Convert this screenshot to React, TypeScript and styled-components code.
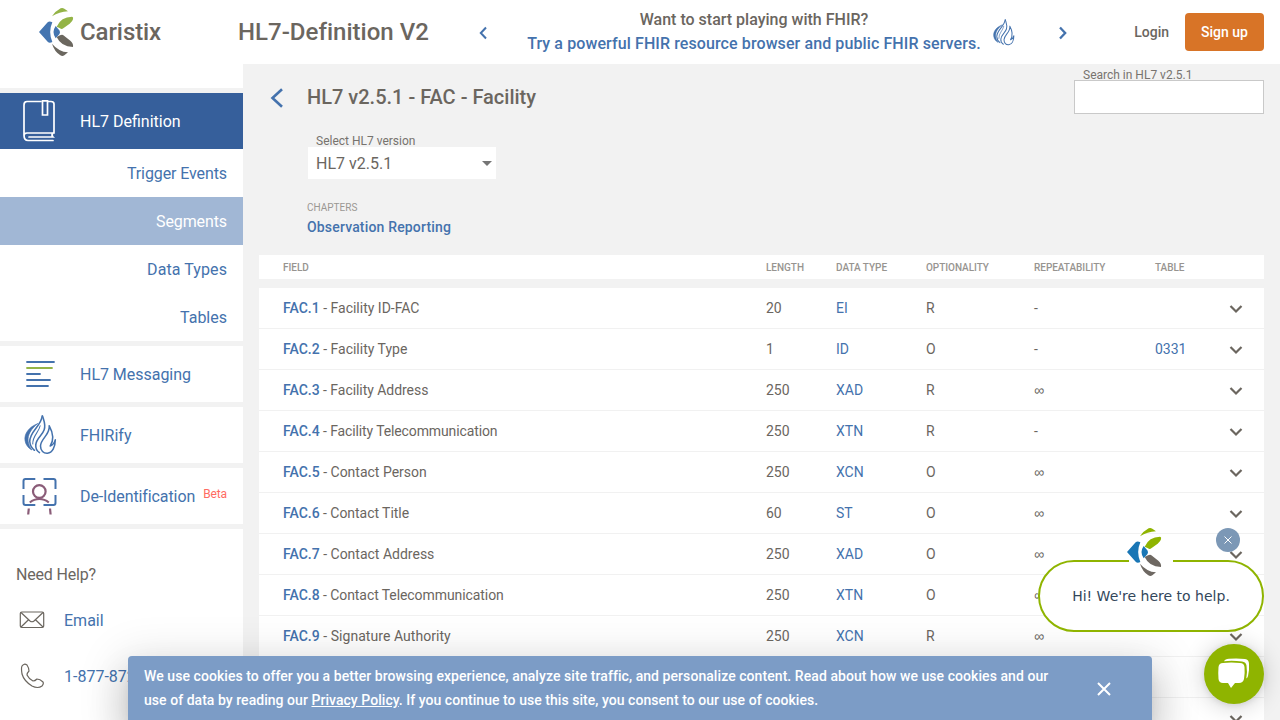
import React from 'react';
import styled, { createGlobalStyle } from 'styled-components';

const BLUE = '#4472ad';
const TEXT = '#6b665f';

const GlobalStyle = createGlobalStyle`
  * { box-sizing: border-box; }
  body {
    margin: 0;
    background: #f2f2f2;
    color: ${TEXT};
    font-family: Roboto, 'Liberation Sans', sans-serif;
    font-size: 14px;
    overflow: hidden;
  }
  a { color: ${BLUE}; text-decoration: none; }
`;

const Page = styled.div`
  display: flex;
  flex-direction: column;
  height: 720px;
  width: 1280px;
  overflow: hidden;
`;

const Header = styled.header`
  display: flex;
  align-items: center;
  flex: none;
  height: 64px;
  padding: 0 16px 0 37px;
  background: #fff;
`;

const Brand = styled.div`
  display: flex;
  align-items: center;
  width: 201px;
  gap: 6px;
  font-size: 24px;
  font-weight: 500;
  letter-spacing: -0.08px;
`;

const ProductName = styled.div`
  width: 237px;
  font-size: 24px;
  font-weight: 500;
  letter-spacing: 0.02px;
  white-space: nowrap;
`;

const Promo = styled.div`
  display: flex;
  align-items: center;
  width: 597px;
`;

const PromoText = styled.div`
  width: 456px;
  margin-left: 34px;
  font-size: 16px;
  line-height: 24px;
  font-weight: 500;
  text-align: center;
  white-space: nowrap;
  a { letter-spacing: 0.1px; }
`;

const PromoFlame = styled.span`
  display: flex;
  margin: 0 39px 0 11px;
`;

const Account = styled.div`
  display: flex;
  align-items: center;
  margin-left: auto;
  gap: 16px;
  font-weight: 500;
`;

const SignUp = styled.button`
  width: 79px;
  height: 38px;
  padding: 0;
  border: 0;
  border-radius: 4px;
  background: #d87427;
  color: #fff;
  font: 500 14px Roboto, sans-serif;
`;

const Body = styled.div`
  display: flex;
  flex: 1;
  min-height: 0;
`;

const Sidebar = styled.nav`
  display: flex;
  flex-direction: column;
  width: 243px;
  flex: none;
  padding-top: 24px;
  background: #fff;
`;

const NavItem = styled.a<{ $active?: boolean; $tracking?: number }>`
  display: flex;
  align-items: center;
  flex: none;
  height: 61px;
  padding-left: 20px;
  border-top: 5px solid #f2f2f2;
  background: ${(p) => (p.$active ? '#365f9b' : '#fff')};
  color: ${(p) => (p.$active ? '#fff' : BLUE)};
  font-size: 16px;
  letter-spacing: ${(p) => p.$tracking ?? 0}px;
`;

const NavIcon = styled.span<{ $indent?: number }>`
  display: flex;
  width: 60px;
  padding-left: ${(p) => p.$indent ?? 0}px;
`;

const Beta = styled.span`
  margin: -5px 0 0 8px;
  color: #ff6b62;
  font-size: 12px;
`;

const SubItem = styled.a<{ $selected?: boolean; $tracking?: number }>`
  display: flex;
  align-items: center;
  justify-content: flex-end;
  flex: none;
  height: 48px;
  padding-right: 16px;
  background: ${(p) => (p.$selected ? '#a1b7d5' : '#fff')};
  color: ${(p) => (p.$selected ? '#fff' : BLUE)};
  font-size: 16px;
  letter-spacing: ${(p) => p.$tracking ?? 0}px;
`;

const Help = styled.div`
  flex: 1;
  padding: 36px 16px 0;
  border-top: 5px solid #f2f2f2;
  font-size: 16px;
`;

const HelpTitle = styled.div`
  height: 18px;
  line-height: 19px;
  letter-spacing: -0.18px;
`;

const HelpLink = styled.a`
  display: flex;
  align-items: center;
  height: 56px;
  padding-top: 2px;
  white-space: nowrap;
`;

const HelpIcon = styled.span`
  display: flex;
  width: 48px;
  padding: 0 0 1px 3px;
`;

const HelpLinks = styled.div`
  padding-top: 8px;
`;

const Main = styled.main`
  flex: 1;
  min-width: 0;
  padding: 0 16px;
`;

const TitleBar = styled.div`
  display: flex;
  height: 68px;
  padding-left: 11px;
`;

const Title = styled.h1`
  flex: 1;
  margin: 0 0 0 22px;
  font-size: 20px;
  font-weight: 500;
  line-height: 66px;
`;

const BackIcon = styled.span`
  display: flex;
  width: 15px;
  padding-top: 24px;
`;

const FieldLabel = styled.label`
  display: block;
  padding-left: 9px;
  color: #77736e;
  font-size: 12px;
  white-space: nowrap;
`;

const Search = styled.div`
  width: 190px;
  padding-top: 4px;
  ${FieldLabel} { line-height: 14px; height: 12px; }
`;

const SearchInput = styled.input`
  display: block;
  width: 190px;
  height: 34px;
  border: 1px solid #c9c9c9;
  background: #fff;
`;

const Filters = styled.div`
  height: 123px;
  padding: 2px 0 0 48px;
  ${FieldLabel} { line-height: 15px; height: 13px; }
`;

const Select = styled.div`
  display: flex;
  align-items: center;
  justify-content: space-between;
  width: 188px;
  height: 32px;
  margin-left: 1px;
  padding: 0 4px 0 8px;
  background: #fff;
  font-size: 16px;
`;

const Caret = styled.span`
  border: 5px solid transparent;
  border-top-color: #757575;
  border-bottom: 0;
`;

const Chapters = styled.div`
  padding-top: 22px;
  color: #9a9793;
  font-size: 10px;
  line-height: 14px;
  a { display: block; font-size: 14px; font-weight: 500; line-height: 24px; letter-spacing: 0.17px; }
`;

const Grid = styled.div`
  display: grid;
  grid-template-columns: 483px 70px 90px 108px 121px 73px 1fr;
  align-items: center;
  padding-left: 24px;
  background: #fff;
`;

const TableHead = styled(Grid)`
  height: 24px;
  margin-bottom: 9px;
  color: #979490;
  font-size: 10px;
  font-weight: 500;
  letter-spacing: -0.03px;
`;

const Row = styled(Grid)`
  height: 41px;
  border-bottom: 1px solid #f1f1f1;
`;

const FieldName = styled.span<{ $tracking: number }>`
  letter-spacing: ${(p) => p.$tracking}px;
  a { font-weight: 500; letter-spacing: 0; }
`;

const Repeat = styled.span`
  font-family: ${(p) => (p.children === '∞' ? "'Liberation Sans'" : 'Roboto')}, sans-serif;
`;

const CookieBar = styled.div`
  position: absolute;
  left: 128px;
  top: 656px;
  display: flex;
  width: 1024px;
  height: 64px;
  padding: 8px 40px 0 16px;
  justify-content: space-between;
  border-radius: 4px 4px 0 0;
  background: #7c9cc6;
  color: #fff;
  font-size: 14px;
  font-weight: 500;
  letter-spacing: 0.065px;
  line-height: 24px;
  white-space: nowrap;
  box-shadow: 0 11px 15px -7px rgba(0, 0, 0, .2), 0 24px 38px 3px rgba(0, 0, 0, .14), 0 9px 46px 8px rgba(0, 0, 0, .12);
  a { color: #fff; text-decoration: underline; }
`;

const CookieSecondLine = styled.span`
  letter-spacing: 0.043px;
`;

const CookieClose = styled.span`
  display: flex;
  padding-top: 17px;
`;

const ChatBubble = styled.div`
  position: absolute;
  left: 1038px;
  top: 560px;
  display: flex;
  align-items: center;
  justify-content: center;
  width: 226px;
  height: 72px;
  border: 2px solid #8fb400;
  border-radius: 36px;
  background: #fff;
  color: #33475b;
  font: 14px 'DejaVu Sans', sans-serif;
`;

const ChatLogo = styled.div`
  position: absolute;
  left: 85px;
  top: -35px;
  display: flex;
`;

const ChatLogoBacking = styled.div`
  position: absolute;
  left: 89px;
  top: -6px;
  width: 44px;
  height: 12px;
  background: #fff;
`;

const ChatClose = styled.div`
  position: absolute;
  left: 1216px;
  top: 528px;
  display: flex;
  align-items: center;
  justify-content: center;
  width: 24px;
  height: 24px;
  border-radius: 50%;
  background: #7c98b6;
`;

const ChatButton = styled.div`
  position: absolute;
  left: 1204px;
  top: 644px;
  display: flex;
  align-items: center;
  justify-content: center;
  width: 60px;
  height: 60px;
  border-radius: 50%;
  background: #8fb400;
  box-shadow: 0 1px 6px rgba(0, 0, 0, .1), 0 2px 24px rgba(0, 0, 0, .2);
`;

const Logo = ({ blue = '#4475b0', green = '#94b447', gray = '#6b675f' }) => (
  <svg width="37" height="50" viewBox="111 21 111 150">
    <path fill={green} d="M156 49Q165 34 182 25Q187 22 193 26L204 34Q178 35 156 49ZM170 80Q183 50 216 50Q221 51 219 58Q218 64 209 71L191 84Q185 89 180 85Z" />
    <path fill={blue} d="M117 96L143 67Q148 62 157 67Q144 96 157 126Q148 131 143 125ZM167 78L174 86Q186 96 174 107L167 115Q154 96 167 78Z" />
    <path fill={gray} d="M170 111L180 106Q187 102 192 107L211 122Q221 131 219 141Q183 140 170 111ZM156 131Q176 155 204 157L193 166Q187 170 181 166Q163 154 156 131Z" />
  </svg>
);

const Flame = ({ w, h, stroke = 4.6 }: { w: number; h: number; stroke?: number }) => (
  <svg width={w} height={h} viewBox="72 226 98 119" fill="none" stroke={BLUE} strokeWidth={stroke} strokeLinecap="round" strokeLinejoin="round">
    <path fill={BLUE} strokeWidth="2" d="M112 252C86 262 72 282 75 302C77 316 86 325 95 330C83 312 80 295 90 277C96 266 104 259 112 252Z" />
    <path d="M126 229C124 258 88 275 89 305C90 318 95 325 103 331" />
    <path d="M127 229C132 245 137 255 132 270C126 288 108 295 107 315C106 325 110 333 118 338" />
    <path strokeWidth="3" d="M120 258C116 278 97 288 98 312" />
    <path d="M147 258C150 285 122 295 121 318C121 332 130 341 142 340C156 339 165 322 165 300C162 310 157 316 150 318C158 305 162 285 147 258" />
  </svg>
);

const BookIcon = () => (
  <svg width="38" height="44" viewBox="0 0 38 44" fill="none" stroke="#fff" strokeWidth="1.7" strokeLinecap="round">
    <path d="M21 2.500H7Q4 2.500 4 6V36Q4 41.500 8 41.500H33M4 37Q4 34 7 34H34V5Q34 2.500 31 2.500H28M33 34Q31 36 33 38H9" />
    <path d="M22.500 1.800H27.500V16H22.500Z" strokeLinejoin="miter" />
  </svg>
);

const MessageIcon = () => (
  <svg width="38" height="28" viewBox="0 0 38 28" stroke={BLUE} strokeWidth="1.8" strokeLinecap="round">
    <path d="M7 2H34M7 14H20M7 20H30M7 26H28" />
    <path d="M7 8H32" stroke="#94b447" />
  </svg>
);

const IdentityIcon = () => (
  <svg width="38" height="40" viewBox="0 0 38 40" fill="none" stroke={BLUE} strokeWidth="2">
    <path d="M15.300 3H5.500Q3.500 3 3.500 5V13M23.500 3H33.500Q35.500 3 35.500 5V13M3.500 19V27Q3.500 29 5.500 29H15.300M23.500 29H33.500Q35.500 29 35.500 27V19" />
    <g stroke="#8a5c78" strokeWidth="2.200">
      <circle cx="19.300" cy="15.500" r="6.300" />
      <path d="M9.800 26.500Q14 23 19.300 23T28.800 26.500M8.800 32.500L8.200 38.500M30 32.500L30.600 38.500" />
    </g>
  </svg>
);

const MailIcon = () => (
  <svg width="26" height="18" viewBox="0 0 26 18" fill="none" stroke={TEXT} strokeWidth="1.2">
    <rect x="1.300" y="1" width="23.400" height="15.500" rx="1.500" />
    <path d="M2 1.500L11 10Q13 11.500 15 10L24 1.500M2 16L9.500 8.800M24 16L16.500 8.800" />
  </svg>
);

const PhoneIcon = () => (
  <svg width="26" height="26" viewBox="0 0 26 26" fill="none" stroke={TEXT} strokeWidth="1.200">
    <path d="M3 3Q5 0 8 2Q10 5 10 8Q8 10 8 12Q10 16 14 18Q16 18 18 16Q21 16 24 19Q25 21 23 23Q19 26 13 23Q5 18 3 11Q2 5 3 3Z" />
  </svg>
);

const Chevron = ({ path, w, h, color = BLUE, stroke = 2 }: { path: string; w: number; h: number; color?: string; stroke?: number }) => (
  <svg width={w} height={h} viewBox={`0 0 ${w} ${h}`} fill="none" stroke={color} strokeWidth={stroke}>
    <path d={path} />
  </svg>
);

type Field = { name: string; length: string; type: string; opt: string; rep: string; table?: string; tracking?: number };

const fields: Field[] = [
  { name: 'Facility ID-FAC', length: '20', type: 'EI', opt: 'R', rep: '-' },
  { name: 'Facility Type', length: '1', type: 'ID', opt: 'O', rep: '-', table: '0331' },
  { name: 'Facility Address', length: '250', type: 'XAD', opt: 'R', rep: '∞', tracking: -0.05 },
  { name: 'Facility Telecommunication', length: '250', type: 'XTN', opt: 'R', rep: '-', tracking: -0.12 },
  { name: 'Contact Person', length: '250', type: 'XCN', opt: 'O', rep: '∞' },
  { name: 'Contact Title', length: '60', type: 'ST', opt: 'O', rep: '∞', tracking: -0.05 },
  { name: 'Contact Address', length: '250', type: 'XAD', opt: 'O', rep: '∞' },
  { name: 'Contact Telecommunication', length: '250', type: 'XTN', opt: 'O', rep: '∞', tracking: -0.08 },
  { name: 'Signature Authority', length: '250', type: 'XCN', opt: 'R', rep: '∞', tracking: 0.05 },
  { name: 'Signature Authority Title', length: '60', type: 'ST', opt: 'O', rep: '-' },
  { name: 'Signature Authority Address', length: '250', type: 'XAD', opt: 'O', rep: '∞' },
];

export default function App() {
  return (
    <Page>
      <GlobalStyle />
      <Header>
        <Brand><Logo />Caristix</Brand>
        <ProductName>HL7-Definition V2</ProductName>
        <Promo>
          <Chevron w={17} h={16} path="M11 3.500L5.800 9L11 14.500" />
          <PromoText>
            Want to start playing with FHIR?<br />
            <a>Try a powerful FHIR resource browser and public FHIR servers.</a>
          </PromoText>
          <PromoFlame><Flame w={22} h={27} stroke={4.5} /></PromoFlame>
          <Chevron w={17} h={16} path="M6 3.500L11.200 9L6 14.500" stroke={2.3} />
        </Promo>
        <Account>Login<SignUp>Sign up</SignUp></Account>
      </Header>
      <Body>
        <Sidebar>
          <NavItem $active><NavIcon><BookIcon /></NavIcon>HL7 Definition</NavItem>
          <SubItem $tracking={-0.1}>Trigger Events</SubItem>
          <SubItem $selected $tracking={-0.1}>Segments</SubItem>
          <SubItem $tracking={0.08}>Data Types</SubItem>
          <SubItem>Tables</SubItem>
          <NavItem $tracking={-0.03}><NavIcon><MessageIcon /></NavIcon>HL7 Messaging</NavItem>
          <NavItem><NavIcon $indent={4}><Flame w={33} h={40} /></NavIcon>FHIRify</NavItem>
          <NavItem $tracking={-0.1}><NavIcon><IdentityIcon /></NavIcon>De-Identification<Beta>Beta</Beta></NavItem>
          <Help>
            <HelpTitle>Need Help?</HelpTitle>
            <HelpLinks>
              <HelpLink><HelpIcon><MailIcon /></HelpIcon>Email</HelpLink>
              <HelpLink><HelpIcon><PhoneIcon /></HelpIcon>1-877-872-0027</HelpLink>
            </HelpLinks>
          </Help>
        </Sidebar>
        <Main>
          <TitleBar>
            <BackIcon><Chevron w={15} h={20} path="M12 1.200L2.500 10L12 18.800" stroke={2.6} /></BackIcon>
            <Title>HL7 v2.5.1 - FAC - Facility</Title>
            <Search>
              <FieldLabel>Search in HL7 v2.5.1</FieldLabel>
              <SearchInput />
            </Search>
          </TitleBar>
          <Filters>
            <FieldLabel>Select HL7 version</FieldLabel>
            <Select>HL7 v2.5.1<Caret /></Select>
            <Chapters>CHAPTERS<a>Observation Reporting</a></Chapters>
          </Filters>
          <TableHead>
            <span>FIELD</span><span>LENGTH</span><span>DATA TYPE</span>
            <span>OPTIONALITY</span><span>REPEATABILITY</span><span>TABLE</span>
          </TableHead>
          {fields.map((f, i) => (
            <Row key={f.name}>
              <FieldName $tracking={f.tracking ?? 0}><a>FAC.{i + 1}</a> - {f.name}</FieldName>
              <span>{f.length}</span>
              <a>{f.type}</a>
              <span>{f.opt}</span>
              <Repeat>{f.rep}</Repeat>
              <a>{f.table}</a>
              <Chevron w={16} h={12} color={TEXT} path="M2.500 4L8 9.500L13.500 4" stroke={2.2} />
            </Row>
          ))}
        </Main>
      </Body>
      <CookieBar>
        <div>
          We use cookies to offer you a better browsing experience, analyze site traffic, and personalize content. Read about how we use cookies and our<br />
          <CookieSecondLine>use of data by reading our <a>Privacy Policy</a>. If you continue to use this site, you consent to our use of cookies.</CookieSecondLine>
        </div>
        <CookieClose><Chevron w={16} h={16} color="#fff" path="M2 2L14 14M14 2L2 14" /></CookieClose>
      </CookieBar>
      <ChatBubble>
        <ChatLogoBacking />
        <ChatLogo><Logo blue="#1976b5" green="#8fb400" gray="#6e6862" /></ChatLogo>
        Hi! We're here to help.
      </ChatBubble>
      <ChatClose><Chevron w={10} h={10} color="#fff" stroke={1} path="M1.500 1.500L8.500 8.500M8.500 1.500L1.500 8.500" /></ChatClose>
      <ChatButton>
        <svg width="34" height="32" viewBox="0 0 34 32" fill="#fff">
          <path d="M7 3.200Q8 1 12 .8Q20 0 28 1Q32 1.500 32 6Q32.500 12 31 18Q30.700 19.500 29.300 20.500Q30.500 13 29.500 7.500Q29 4 25 3.500Q16 2.400 7 3.200Z" />
          <path d="M6 5Q14 4 23 5Q27 5 27.500 9Q28 15 27 21Q26 25 22 25H18L14 30L11 25H6Q2 25 1.500 21Q1 15 1.500 9Q2 5 6 5Z" />
        </svg>
      </ChatButton>
    </Page>
  );
}
